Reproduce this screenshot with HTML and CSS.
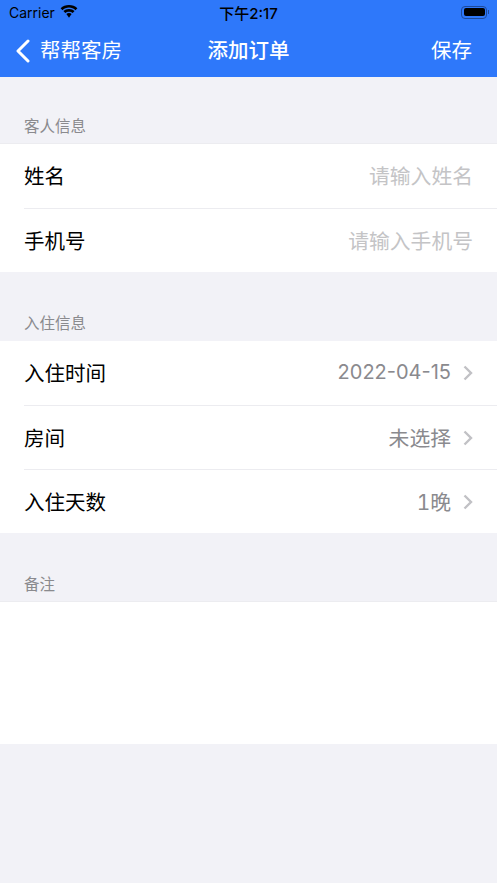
FILE: index.html
```html
<!DOCTYPE html>
<html lang="zh-CN">
<head>
  <meta charset="UTF-8">
  <title>添加订单</title>
  <link rel="stylesheet" href="styles.css">
</head>
<body>
  <header class="top">
    <div class="status-bar">
      <div class="status-left">
        <span class="carrier">Carrier</span>
        <svg class="wifi" width="18" height="13" viewBox="0 0 18 13">
          <path d="M9 2.6c2.5 0 4.8 1 6.5 2.6L17.4 3.2C15.2 1.2 12.2 0 9 0S2.8 1.2.6 3.2l1.9 2C4.2 3.6 6.5 2.6 9 2.6z"/>
          <path d="M9 6.7c1.4 0 2.7.5 3.7 1.4l1.9-2C13.1 4.7 11.2 3.9 9 3.9s-4.1.8-5.6 2.2l1.9 2c1-.9 2.3-1.4 3.7-1.4z"/>
          <path d="M9 8.1c-1 0-1.9.4-2.6 1L9 12.8l2.6-3.7C10.9 8.5 10 8.1 9 8.1z"/>
        </svg>
      </div>
      <span class="clock">下午2:17</span>
      <div class="battery"><div class="battery-fill"></div></div>
    </div>
    <nav class="nav-bar">
      <div class="nav-back">
        <svg class="back-icon" width="14" height="24" viewBox="0 0 14 24">
          <path d="M12 2 L2 12 L12 22" fill="none" stroke="#fff" stroke-width="3" stroke-linecap="round" stroke-linejoin="round"/>
        </svg>
        <span>帮帮客房</span>
      </div>
      <h1 class="nav-title">添加订单</h1>
      <span class="nav-save">保存</span>
    </nav>
  </header>

  <div class="section-label first">客人信息</div>
  <div class="group bordered">
    <div class="row"><span>姓名</span><span class="placeholder">请输入姓名</span></div>
    <div class="row"><span>手机号</span><span class="placeholder">请输入手机号</span></div>
  </div>

  <div class="section-label">入住信息</div>
  <div class="group">
    <div class="row">
      <span>入住时间</span>
      <span class="value"><span class="date">2022-04-15</span><svg class="chevron" width="10" height="16" viewBox="0 0 10 16"><path d="M1.5 1.5 L8 8 L1.5 14.5" fill="none" stroke="#c1c1c5" stroke-width="2.4"/></svg></span>
    </div>
    <div class="row">
      <span>房间</span>
      <span class="value">未选择<svg class="chevron" width="10" height="16" viewBox="0 0 10 16"><path d="M1.5 1.5 L8 8 L1.5 14.5" fill="none" stroke="#c1c1c5" stroke-width="2.4"/></svg></span>
    </div>
    <div class="row">
      <span>入住天数</span>
      <span class="value">1晚<svg class="chevron" width="10" height="16" viewBox="0 0 10 16"><path d="M1.5 1.5 L8 8 L1.5 14.5" fill="none" stroke="#c1c1c5" stroke-width="2.4"/></svg></span>
    </div>
  </div>

  <div class="section-label notes-label">备注</div>
  <div class="notes"></div>
</body>
</html>
```

FILE: styles.css
```css
body {
  font-family: "Inter", "Noto Sans CJK SC", sans-serif;
  margin: 0;
  height: 883px;
  overflow: hidden;
  color: #000;
  background-color: #f2f2f7;
}

.top {
  background: #2e78fa;
  height: 77px;
}

.status-bar {
  display: flex;
  align-items: center;
  justify-content: space-between;
  height: 25px;
  padding: 0 10px 0 9px;
  position: relative;
  font-size: 14px;
  color: #000;
}

.status-left {
  display: flex;
  align-items: center;
  gap: 5px;
}

.wifi {
  margin-top: -2px;
}

.clock {
  position: absolute;
  left: 0;
  right: 0;
  text-align: center;
  font-size: 15px;
  font-weight: 500;
}

.battery {
  width: 26px;
  height: 13px;
  margin-top: -1px;
  padding: 1.5px;
  box-sizing: border-box;
  border: 1px solid #1d4a9c;
  border-radius: 4px;
  position: relative;
}

.battery::after {
  content: "";
  position: absolute;
  right: -3px;
  top: 3px;
  width: 1px;
  height: 4px;
  background: #1d4a9c;
}

.battery-fill {
  height: 100%;
  background: #000;
  border-radius: 2px;
}

.nav-bar {
  display: flex;
  align-items: center;
  justify-content: space-between;
  height: 48px;
  padding: 0 25px 0 16px;
  position: relative;
  color: #fff;
  font-size: 20.5px;
}

.nav-back {
  display: flex;
  align-items: center;
  gap: 10px;
}

.back-icon {
  margin-top: 3px;
}

.nav-title {
  position: absolute;
  left: 0;
  right: 0;
  margin: 0;
  text-align: center;
  font-size: 20.5px;
  font-weight: 500;
}

.section-label {
  padding: 42px 24px 7px;
  font-size: 15.5px;
  line-height: 20px;
  color: #8a8a8e;
}

.section-label.first {
  padding: 40px 24px 6px;
}

.group {
  background: #fff;
}

.group.bordered {
  border-top: 1px solid #ececf0;
}

.row {
  display: flex;
  align-items: center;
  justify-content: space-between;
  box-sizing: border-box;
  height: 64px;
  margin-left: 24px;
  padding: 0 24px 2px 0;
  font-size: 20.5px;
  border-bottom: 1px solid #ececf0;
}

.row:first-child {
  height: 65px;
}

.row:last-child {
  height: 63px;
  border-bottom: none;
}

.placeholder {
  font-size: 20.8px;
  color: #c4c4c6;
}

.value {
  display: flex;
  align-items: center;
  font-size: 20.8px;
  font-variant-numeric: tabular-nums;
  color: #8a8a8e;
}

.date {
  font-size: 20px;
  font-variant-numeric: normal;
}

.chevron {
  margin: 2px 0 0 12px;
}

.notes-label {
  padding: 42px 24px 6px;
}

.notes {
  height: 142px;
  background: #fff;
  border-top: 1px solid #ececf0;
}
```
